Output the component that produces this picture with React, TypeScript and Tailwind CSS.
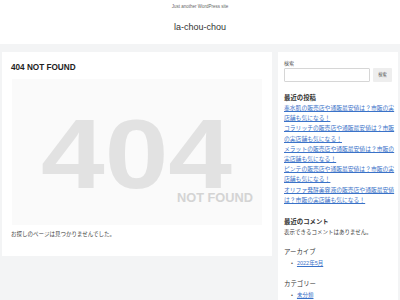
const posts = [
  ['秦水肌の販売店や通販最安値は？市販の実', '店舗も気になる！'],
  ['コラリッチの販売店や通販最安値は？市販', 'の実店舗も気になる！'],
  ['メラットの販売店や通販最安値は？市販の', '実店舗も気になる！'],
  ['ピンテの販売店や通販最安値は？市販の実', '店舗も気になる！'],
  ['オリファ発酵美容液の販売店や通販最安値', 'は？市販の実店舗も気になる！'],
]

function NotFoundImage() {
  return (
    <svg width="250" height="146" viewBox="0 0 250 146" className="block">
      <rect width="250" height="146" fill="#fafafa" />
      <text
        x="29"
        y="109"
        fontSize="99"
        fontWeight="bold"
        fill="#e2e2e2"
        textLength="191"
        lengthAdjust="spacingAndGlyphs"
        fontFamily="Liberation Sans, sans-serif"
      >
        404
      </text>
      <text
        x="165"
        y="122.5"
        fontSize="12.5"
        fontWeight="bold"
        fill="#d4d4d4"
        textLength="76"
        lengthAdjust="spacingAndGlyphs"
        fontFamily="Liberation Sans, sans-serif"
      >
        NOT FOUND
      </text>
    </svg>
  )
}

export default function App() {
  return (
    <div className="w-[400px] h-[300px] overflow-hidden bg-[#f3f4f5] font-['Liberation_Sans','Noto_Sans_CJK_JP',sans-serif] text-[#333]">
      <header className="h-[44px] bg-white flex flex-col items-center">
        <p className="mt-[4px] text-[4.5px] leading-[5px] text-[#666]">Just another WordPress site</p>
        <h1 className="mt-[13px] text-[9px] leading-[10px] text-[#333]">la-chou-chou</h1>
      </header>

      <div className="flex gap-[6px] pl-[2px] pt-[8px] items-start">
        <main className="w-[270px] h-[204px] bg-white px-[10px] pt-[11px]">
          <h2 className="-ml-[1px] text-[8.2px] leading-[10px] font-bold text-[#222]">404 NOT FOUND</h2>
          <div className="mt-[6px]">
            <NotFoundImage />
          </div>
          <p className="-ml-[1px] mt-[5px] text-[5.5px] leading-[8px] text-[#444]">
            お探しのページは見つかりませんでした。
          </p>
        </main>

        <aside className="w-[120px] h-[260px] bg-white px-[6px] pt-[7px]">
          <p className="text-[5px] leading-[8px] text-[#555]">検索</p>
          <div className="mt-[1px] flex gap-[3px]">
            <div className="w-[86px] h-[14px] border border-[#d6d6d6] rounded-[1px] bg-white" />
            <div className="flex-1 h-[14px] bg-[#eeeeee] rounded-[1px] flex items-center justify-center text-[4.2px] text-[#555]">
              検索
            </div>
          </div>

          <h3 className="mt-[11px] text-[6.4px] leading-[10px] font-bold text-[#333]">最近の投稿</h3>
          <ul className="text-[5.8px] leading-[10.2px] whitespace-nowrap">
            {posts.map(([a, b]) => (
              <li key={a}>
                <a className="text-[#3a72c8] underline">
                  {a}
                  <br />
                  {b}
                </a>
              </li>
            ))}
          </ul>

          <h3 className="mt-[12px] text-[6.4px] leading-[10px] font-bold text-[#333]">最近のコメント</h3>
          <p className="text-[5.5px] leading-[10px] text-[#444]">表示できるコメントはありません。</p>

          <h3 className="mt-[10px] text-[6.4px] leading-[10px] text-[#333]">アーカイブ</h3>
          <ul className="mt-[1px] text-[5.5px] leading-[10px]">
            <li className="flex items-center pl-[7px]">
              <span className="text-[#555] mr-[4px]">•</span>
              <a className="text-[#3a72c8] underline">2022年5月</a>
            </li>
          </ul>

          <h3 className="mt-[11px] text-[6.4px] leading-[10px] text-[#333]">カテゴリー</h3>
          <ul className="mt-[1px] text-[5.5px] leading-[10px]">
            <li className="flex items-center pl-[7px]">
              <span className="text-[#555] mr-[4px]">•</span>
              <a className="text-[#3a72c8] underline">未分類</a>
            </li>
          </ul>
        </aside>
      </div>
    </div>
  )
}
